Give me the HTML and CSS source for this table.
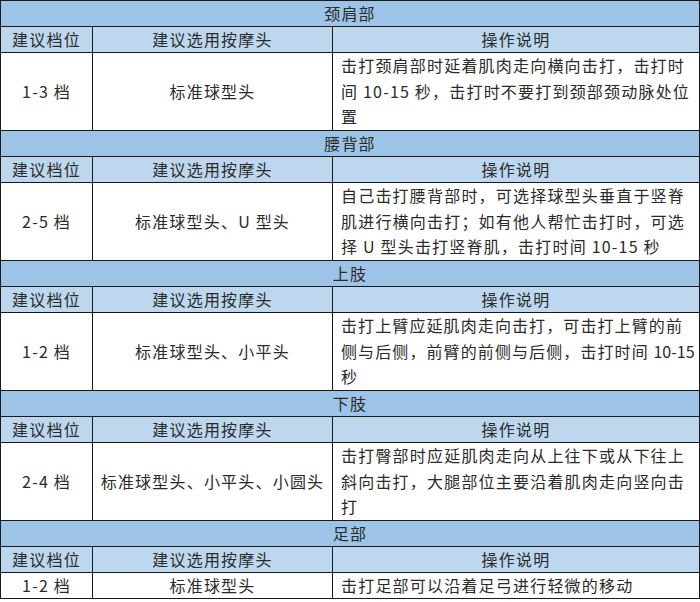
FILE: index.html
```html
<!DOCTYPE html>
<html lang="zh-CN">
<head>
<meta charset="utf-8">
<title>按摩头使用说明</title>
<link rel="stylesheet" href="styles.css">
</head>
<body>
<table class="guide">
  <colgroup>
    <col class="c-level">
    <col class="c-head">
    <col class="c-desc">
  </colgroup>
  <tbody>
    <tr class="section"><td colspan="3">颈肩部</td></tr>
    <tr class="header"><td>建议档位</td><td>建议选用按摩头</td><td>操作说明</td></tr>
    <tr class="data"><td>1-3 档</td><td>标准球型头</td><td class="desc">击打颈肩部时延着肌肉走向横向击打，击打时间 10-15 秒，击打时不要打到颈部颈动脉处位置</td></tr>

    <tr class="section"><td colspan="3">腰背部</td></tr>
    <tr class="header"><td>建议档位</td><td>建议选用按摩头</td><td>操作说明</td></tr>
    <tr class="data"><td>2-5 档</td><td>标准球型头、U 型头</td><td class="desc">自己击打腰背部时，可选择球型头垂直于竖脊肌进行横向击打；如有他人帮忙击打时，可选择 U 型头击打竖脊肌，击打时间 10-15 秒</td></tr>

    <tr class="section"><td colspan="3">上肢</td></tr>
    <tr class="header"><td>建议档位</td><td>建议选用按摩头</td><td>操作说明</td></tr>
    <tr class="data"><td>1-2 档</td><td>标准球型头、小平头</td><td class="desc tight">击打上臂应延肌肉走向击打，可击打上臂的前侧与后侧，前臂的前侧与后侧，击打时间 <span class="num">10-15</span> 秒</td></tr>

    <tr class="section"><td colspan="3">下肢</td></tr>
    <tr class="header"><td>建议档位</td><td>建议选用按摩头</td><td>操作说明</td></tr>
    <tr class="data"><td>2-4 档</td><td>标准球型头、小平头、小圆头</td><td class="desc">击打臀部时应延肌肉走向从上往下或从下往上斜向击打，大腿部位主要沿着肌肉走向竖向击打</td></tr>

    <tr class="section"><td colspan="3">足部</td></tr>
    <tr class="header"><td>建议档位</td><td>建议选用按摩头</td><td>操作说明</td></tr>
    <tr class="data single"><td>1-2 档</td><td>标准球型头</td><td class="desc">击打足部可以沿着足弓进行轻微的移动</td></tr>
  </tbody>
</table>
</body>
</html>
```

FILE: styles.css
```css
html, body {
  margin: 0;
  padding: 0;
  background: #ffffff;
}

.guide {
  border-collapse: collapse;
  table-layout: fixed;
  width: 699px;
  font-family: "Noto Sans CJK SC", "Noto Sans", sans-serif;
  font-size: 16px;
  letter-spacing: 1.2px;
  color: #2a2a2a;
}

.c-level { width: 92px; }
.c-head { width: 240px; }
.c-desc { width: 367px; }

.guide td {
  border: 1px solid #1a1a1a;
  padding: 0;
  vertical-align: middle;
  text-align: center;
  line-height: 25px;
  height: 25px;
}

.section td {
  background: #9dc3e6;
}

.header td {
  background: #bdd7ee;
}

.data td {
  background: #ffffff;
  height: 77px;
  line-height: 25.67px;
}

.data.single td {
  height: 25px;
  line-height: 25px;
}

.guide td.desc {
  text-align: left;
  padding-left: 8px;
  padding-right: 0;
}

.guide td.desc.tight {
  letter-spacing: 1.1px;
}

.num {
  white-space: nowrap;
  letter-spacing: 0;
}
```
